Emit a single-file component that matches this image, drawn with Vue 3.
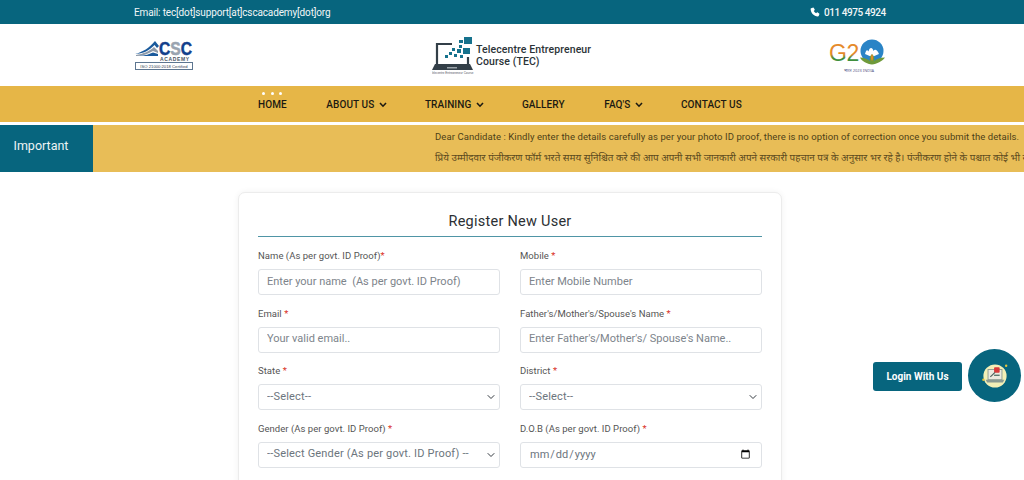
<script setup>
const navItems = [
  { label: 'HOME', dots: true },
  { label: 'ABOUT US', caret: true },
  { label: 'TRAINING', caret: true },
  { label: 'GALLERY' },
  { label: "FAQ'S", caret: true },
  { label: 'CONTACT US' },
]
</script>

<template>
  <div class="page">
    <div class="topbar">
      <span class="email">Email: tec[dot]support[at]cscacademy[dot]org</span>
      <span class="phone">
        <svg width="10" height="10" viewBox="0 0 24 24"><path fill="#fff" d="M6.6 1.5 2.6 3.2C1.8 3.6 1.4 4.4 1.5 5.300 2.4 14.900 9.100 21.600 18.700 22.500 19.600 22.600 20.400 22.200 20.800 21.400L22.500 17.400C22.800 16.700 22.600 15.900 22 15.400L18.400 12.900C17.800 12.500 17 12.600 16.500 13.100L14.600 15C12.300 13.800 10.200 11.700 9 9.400L10.900 7.500C11.400 7 11.500 6.200 11.100 5.600L8.600 2C8.100 1.400 7.300 1.200 6.600 1.500Z"/></svg>
        011 4975 4924
      </span>
    </div>

    <header class="brand">
      <div class="csc">
        <svg width="59" height="30" viewBox="0 0 59 30">
          <path fill="#1a5a9c" d="M0 14C8 12 14 8 20 1L24 6 22 8 19.500 5C15 10 8 14 0 14Z"/>
          <path fill="#8d99a8" d="M1 15C8 14 15 11 19 7L23 11 23 13 18 11C13 14 7 16 1 16Z"/>
          <path fill="#1a5a9c" d="M4 16C10 15.500 15 14 18 12.500L23 14 23 16Z"/>
          <text x="24" y="15" textLength="33" lengthAdjust="spacingAndGlyphs" class="csc-word">C<tspan fill="#9aa4b0" stroke="#9aa4b0">S</tspan>C</text>
          <text x="25" y="20.500" textLength="29" class="csc-sub">ACADEMY</text>
          <rect x="0.500" y="22.500" width="57" height="7" fill="#fff" stroke="#5d7690"/>
          <text x="29" y="27.800" text-anchor="middle" class="csc-iso">ISO 21000:2018 Certified</text>
        </svg>
      </div>
      <div class="tec">
        <svg width="42" height="37" viewBox="0 0 42 37">
          <path fill="none" stroke="#333f48" stroke-width="2.200" d="M5 28V7H20"/>
          <path fill="none" stroke="#333f48" stroke-width="2.200" d="M36 20V28"/>
          <path fill="#333f48" d="M3 27H38L41 33H0Z"/>
          <rect x="15" y="30" width="10" height="1.500" fill="#9aa3a9"/>
          <g fill="#16728d">
            <rect x="32" y="0" width="8" height="7"/>
            <rect x="27" y="3" width="4" height="3"/>
            <rect x="27" y="8" width="3" height="3"/>
            <rect x="31" y="11" width="7" height="6"/>
            <rect x="25" y="12" width="4" height="4"/>
            <rect x="20" y="11" width="3" height="3"/>
            <rect x="17" y="15" width="3" height="3"/>
            <rect x="22" y="17" width="3" height="3"/>
            <rect x="13" y="18" width="3" height="3"/>
            <rect x="28" y="18" width="3" height="3"/>
          </g>
          <text x="20" y="36.500" text-anchor="middle" class="tec-sub">Telecentre Entrepreneur Course</text>
        </svg>
        <span class="tec-name">Telecentre Entrepreneur<br />Course (TEC)</span>
      </div>
      <div class="g20">
        <svg width="58" height="34" viewBox="0 0 58 34">
          <defs>
            <linearGradient id="tri" x1="0" y1="0" x2="0" y2="1">
              <stop offset="0.550" stop-color="#e58a2b"/>
              <stop offset="0.700" stop-color="#3f8f3c"/>
            </linearGradient>
          </defs>
          <text x="0" y="22" class="g20-g">G</text>
          <text x="17.500" y="22" class="g20-2">2</text>
          <circle cx="43" cy="12" r="11.500" fill="#2a84c6"/>
          <path fill="#fff" d="M36 15C37 11 38 10 39.500 12.500 40.500 8 43.500 8 44.500 12 45.500 10 48 10 50 15L43 18Z"/>
          <path fill="#6f9a3a" d="M43 25.500C38 25 33 22.500 31 18.500 35 18.500 38 20 41 22 40 19.500 41 17 43 15 45 17 46 19.500 45 22 48 20 51 18.500 56 18.500 53 22.500 48 25 43 25.500Z"/>
          <path fill="#e08a2a" d="M43 22C41.500 20 41.500 17.500 43 15 44.500 17.500 44.500 20 43 22Z"/>
          <text x="30" y="33" text-anchor="middle" class="g20-sub">भारत 2023 INDIA</text>
        </svg>
      </div>
    </header>

    <nav class="nav">
      <a v-for="item in navItems" :key="item.label" class="nav-item">
        <span v-if="item.dots" class="dots"><i></i><i></i><i></i></span>
        {{ item.label }}
        <svg v-if="item.caret" class="caret" width="8" height="6" viewBox="0 0 8 6"><path fill="none" stroke="#1c1a12" stroke-width="1.600" d="M1 1 4 4.200 7 1"/></svg>
      </a>
    </nav>

    <section class="notice">
      <div class="notice-title">Important</div>
      <div class="notice-body">
        <p>Dear Candidate : Kindly enter the details carefully as per your photo ID proof, there is no option of correction once you submit the details.</p>
        <p class="hi">प्रिये उम्मीदवार पंजीकरण फॉर्म भरते समय सुनिश्चित करे की आप अपनी सभी जानकारी अपने सरकारी पहचान पत्र के अनुसार भर रहे है। पंजीकरण होने के पश्चात कोई भी सुधार</p>
      </div>
    </section>

    <main class="content">
      <form class="card">
        <h2>Register New User</h2>
        <div class="grid">
          <label class="field">
            <span class="lbl">Name (As per govt. ID Proof)<b>*</b></span>
            <input type="text" placeholder="Enter your name  (As per govt. ID Proof)" />
          </label>
          <label class="field">
            <span class="lbl">Mobile <b>*</b></span>
            <input type="text" placeholder="Enter Mobile Number" />
          </label>
          <label class="field">
            <span class="lbl">Email <b>*</b></span>
            <input type="text" placeholder="Your valid email.." />
          </label>
          <label class="field">
            <span class="lbl">Father's/Mother's/Spouse's Name <b>*</b></span>
            <input type="text" placeholder="Enter Father's/Mother's/ Spouse's Name.." />
          </label>
          <label class="field">
            <span class="lbl">State <b>*</b></span>
            <select><option>--Select--</option></select>
          </label>
          <label class="field">
            <span class="lbl">District <b>*</b></span>
            <select><option>--Select--</option></select>
          </label>
          <label class="field">
            <span class="lbl">Gender (As per govt. ID Proof) <b>*</b></span>
            <select><option>--Select Gender (As per govt. ID Proof) --</option></select>
          </label>
          <label class="field">
            <span class="lbl">D.O.B (As per govt. ID Proof) <b>*</b></span>
            <input type="date" />
          </label>
        </div>
      </form>
    </main>

    <div class="login">
      <button type="button">Login With Us</button>
      <span class="login-badge">
        <svg width="26" height="26" viewBox="0 0 28 28">
          <circle cx="14" cy="14" r="12.500" fill="#f3efb6"/>
          <rect x="6.500" y="7" width="15" height="11" fill="#eceadf" stroke="#8b9a92"/>
          <path fill="#8b9a92" d="M4 18H24L22.500 21H5.500Z"/>
          <rect x="13" y="4.500" width="6" height="6" rx="1" fill="#d83a3a"/>
          <path stroke="#4e5f5a" stroke-width="1.200" d="M9 15 14 10"/>
          <rect x="13" y="12.500" width="6" height="1.500" fill="#5c7a70"/>
          <circle cx="26" cy="3" r="1.300" fill="#e5c43c"/>
          <circle cx="1.500" cy="18" r="1.300" fill="#e5c43c"/>
        </svg>
      </span>
    </div>
  </div>
</template>

<style>
html, body {
  margin: 0;
  height: 480px;
  overflow: hidden;
  background: #fff;
}
</style>

<style scoped>
.page {
  position: relative;
  height: 480px;
  overflow: hidden;
  font-family: Roboto, "Noto Sans", "Liberation Sans", sans-serif;
  color: #212529;
}
.topbar {
  height: 24px;
  background: #07657e;
  color: #f2f6f7;
  font-size: 10px;
  display: flex;
  align-items: center;
  padding-left: 134px;
}
.email {
  width: 676px;
  letter-spacing: -0.140px;
}
.phone {
  display: flex;
  align-items: center;
  gap: 4px;
  font-weight: 500;
  letter-spacing: -0.450px;
}
.brand {
  height: 62px;
  display: flex;
  align-items: center;
  position: relative;
}
.csc {
  margin-left: 135px;
  display: flex;
}
.csc-word {
  font: 700 18px "Liberation Sans", sans-serif;
  fill: #123f8c;
  stroke: #123f8c;
  stroke-width: 0.500px;
}
.csc-sub {
  font: 700 5px "Liberation Sans", sans-serif;
  fill: #4a5563;
}
.csc-iso {
  font: 400 4.200px "Liberation Sans", sans-serif;
  fill: #33414f;
}
.tec {
  margin-left: 238px;
  display: flex;
  align-items: center;
  gap: 2px;
  padding-top: 1px;
}
.tec-sub {
  font: 400 3px "Liberation Sans", sans-serif;
  fill: #556;
}
.tec-name {
  font-size: 10.500px;
  font-weight: 500;
  line-height: 12px;
  color: #2b3338;
  letter-spacing: 0.100px;
  margin-top: 1px;
}
.g20 {
  position: absolute;
  left: 829px;
  top: 15px;
  display: flex;
}
.g20-g,
.g20-2 {
  font: 400 23px "Liberation Sans", sans-serif;
  fill: url(#tri);
}
.g20-sub {
  font: 400 4px "Noto Sans", sans-serif;
  fill: #5a5a8c;
}
.nav {
  height: 36px;
  background: #e6b647;
  display: flex;
  align-items: center;
  padding-left: 258px;
  gap: 39.500px;
}
.nav-item {
  position: relative;
  font-size: 10px;
  font-weight: 500;
  color: #1c1a12;
  display: flex;
  align-items: center;
  gap: 5px;
  letter-spacing: 0.100px;
}
.dots {
  position: absolute;
  top: -7px;
  left: 4px;
  display: flex;
  gap: 5.500px;
}
.dots i {
  width: 3px;
  height: 3px;
  border-radius: 50%;
  background: #fff;
}
.caret {
  margin-top: 1px;
  margin-right: -2px;
}
.notice {
  margin-top: 3px;
  height: 47px;
  background: #e8bd57;
  display: flex;
  overflow: hidden;
}
.notice-title {
  width: 93px;
  flex: none;
  background: #07657e;
  color: #eef4f5;
  font-size: 12.500px;
  box-sizing: border-box;
  padding-left: 13.500px;
  line-height: 41px;
}
.notice-body {
  padding-left: 342px;
  white-space: nowrap;
  font-size: 9.500px;
  color: #4d3f17;
}
.notice-body p {
  margin: 0;
  height: 23px;
  line-height: 24px;
  letter-spacing: 0.080px;
}
.notice-body .hi {
  line-height: 21px;
  font-family: "Noto Sans Devanagari", "Noto Sans", "DejaVu Sans", sans-serif;
  font-size: 9.900px;
  letter-spacing: 0;
  color: #5c4a1e;
}
.content {
  display: flex;
  padding: 20px 0 0 238px;
}
.card {
  width: 544px;
  height: 320px;
  box-sizing: border-box;
  padding: 0 19px;
  background: #fff;
  border: 1px solid #ececec;
  border-radius: 7px;
  box-shadow: 0 0 6px rgba(0, 0, 0, 0.06);
}
h2 {
  margin: 0 0 13px;
  height: 43px;
  line-height: 57px;
  text-align: center;
  font-size: 14.500px;
  font-weight: 400;
  color: #2c2f33;
  border-bottom: 1px solid #4f95a6;
  letter-spacing: 0.250px;
}
.grid {
  display: grid;
  grid-template-columns: 242px 242px;
  column-gap: 20px;
  row-gap: 12.500px;
}
.field {
  display: flex;
  flex-direction: column;
}
.lbl {
  height: 19px;
  font-size: 9.500px;
  line-height: 12px;
  color: #555;
  letter-spacing: 0.040px;
}
.lbl b {
  color: #d93025;
  font-weight: 400;
}
input,
select {
  height: 26px;
  width: 100%;
  box-sizing: border-box;
  border: 1px solid #dfe2e6;
  border-radius: 3px;
  background-color: #fff;
  font-family: inherit;
  font-size: 11px;
  color: #6c757d;
  padding: 0 8px;
  margin: 0;
}
input[type="text"] {
  padding-bottom: 2px;
}
input::placeholder {
  color: #7d848b;
  opacity: 1;
}
select {
  appearance: none;
  letter-spacing: 0.180px;
  padding: 0 20px 2px 8px;
  background-image: url("data:image/svg+xml,%3Csvg xmlns='http://www.w3.org/2000/svg' viewBox='0 0 16 16'%3E%3Cpath fill='none' stroke='%23343a40' stroke-linecap='round' stroke-linejoin='round' stroke-width='2' d='m2 5 6 6 6-6'/%3E%3C/svg%3E");
  background-repeat: no-repeat;
  background-position: right 4.500px center;
  background-size: 8px 8px;
}
.login {
  position: absolute;
  left: 873px;
  top: 349px;
  display: flex;
  align-items: center;
  gap: 6px;
}
.login button {
  width: 89px;
  height: 29px;
  margin-top: 2px;
  border: none;
  border-radius: 3px;
  background: #07657e;
  color: #fff;
  font-family: inherit;
  font-size: 10px;
  font-weight: 700;
  padding: 0;
}
.login-badge {
  width: 53px;
  height: 53px;
  border-radius: 50%;
  background: #07657e;
  display: flex;
  align-items: center;
  justify-content: center;
}
</style>
